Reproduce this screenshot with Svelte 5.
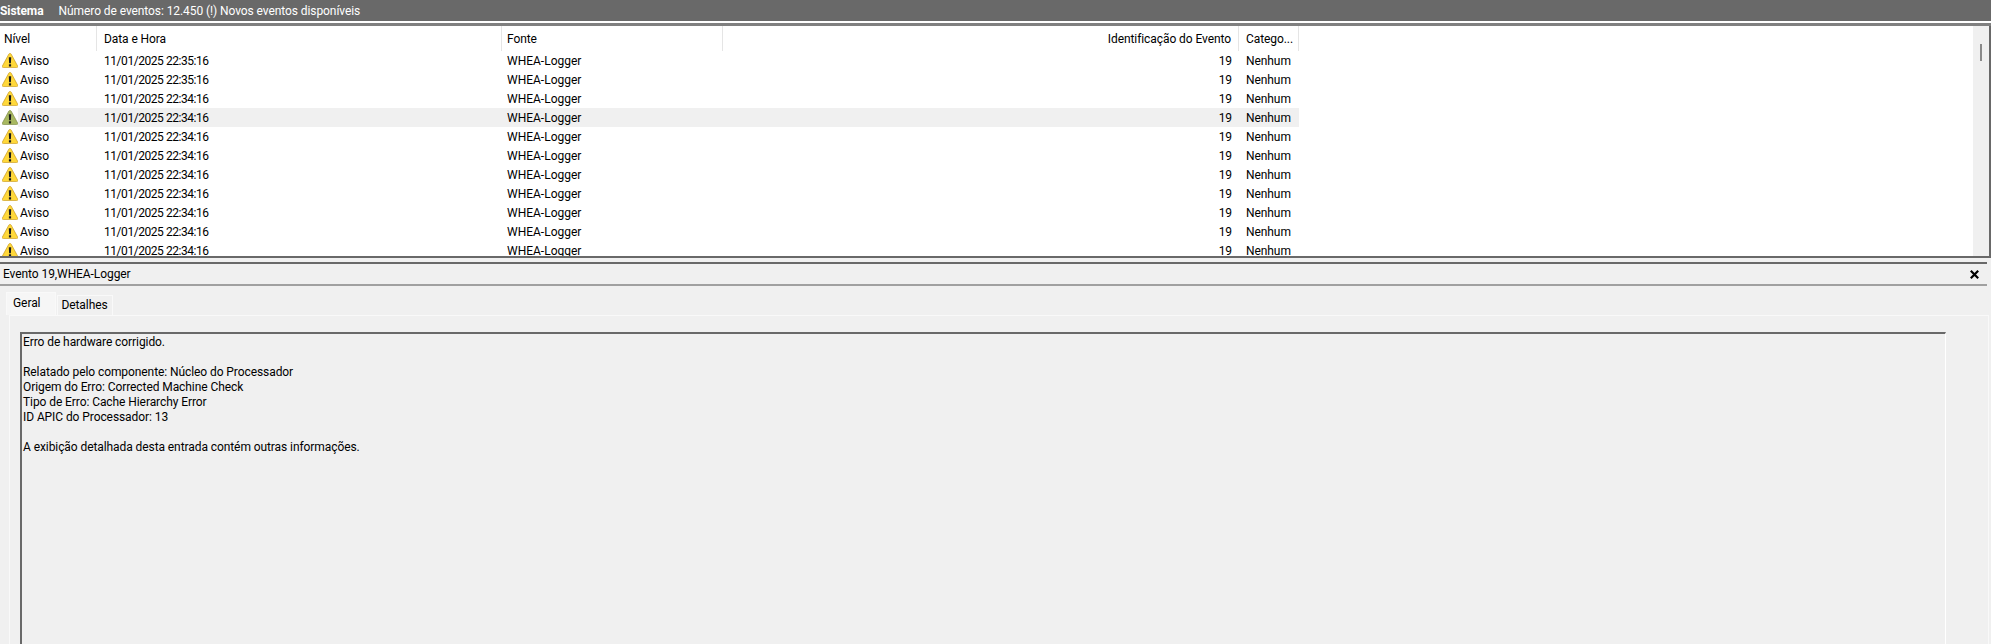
<script lang="ts">
  const columns = [
    { title: 'Nível', width: 97 },
    { title: 'Data e Hora', width: 405 },
    { title: 'Fonte', width: 221 },
    { title: 'Identificação do Evento', width: 516, right: true },
    { title: 'Catego...', width: 60 },
  ]

  const rows = [
    '11/01/2025 22:35:16',
    '11/01/2025 22:35:16',
    '11/01/2025 22:34:16',
    '11/01/2025 22:34:16',
    '11/01/2025 22:34:16',
    '11/01/2025 22:34:16',
    '11/01/2025 22:34:16',
    '11/01/2025 22:34:16',
    '11/01/2025 22:34:16',
    '11/01/2025 22:34:16',
    '11/01/2025 22:34:16',
  ]

  const selected_row = 3

  const message = [
    'Erro de hardware corrigido.',
    '',
    'Relatado pelo componente: Núcleo do Processador',
    'Origem do Erro: Corrected Machine Check',
    'Tipo de Erro: Cache Hierarchy Error',
    'ID APIC do Processador: 13',
    '',
    'A exibição detalhada desta entrada contém outras informações.',
  ]
</script>

<div class="page">
  <header class="title_bar">
    <strong>Sistema</strong>
    <span>Número de eventos: 12.450 (!) Novos eventos disponíveis</span>
  </header>
  <div class="title_rule"></div>

  <section class="event_list">
    <div class="table_area">
      <div class="table_head">
        {#each columns as column}
          <div
            class="head_cell"
            class:right={column.right}
            style="width: {column.width}px"
          >
            {column.title}
          </div>
        {/each}
      </div>

      {#each rows as time, index}
        <div class="table_row">
          <svg
            class="warning_icon"
            class:muted={index === selected_row}
            viewBox="0 0 16 15"
            aria-hidden="true"
          >
            <path class="triangle" d="M8 .4c.5 0 .9.3 1.2.8l6.4 11.8c.4.8 0 1.6-1 1.6H1.4c-1 0-1.4-.8-1-1.6L6.8 1.2C7.1.7 7.5.4 8 .4z" />
            <path class="bang" d="M6.8 4.2h2.4l-.3 6H7.1zM6.9 11.2h2.2v2.2H6.9z" />
          </svg>
          <div class="row_cells" class:selected={index === selected_row}>
            <div class="cell level">Aviso</div>
            <div class="cell time">{time}</div>
            <div class="cell source">WHEA-Logger</div>
            <div class="cell event_id">19</div>
            <div class="cell category">Nenhum</div>
          </div>
        </div>
      {/each}
    </div>

    <div class="scrollbar">
      <div class="scroll_thumb"></div>
    </div>
  </section>

  <section class="details">
    <div class="details_title">
      <span>Evento 19,WHEA-Logger</span>
      <svg class="close_icon" viewBox="0 0 9 9" aria-hidden="true">
        <path d="M.8.8l7.4 7.4M8.2.8L.8 8.2" />
      </svg>
    </div>

    <div class="tabs">
      <div class="tab active">Geral</div>
      <div class="tab">Detalhes</div>
    </div>

    <div class="tab_panel">
      <div class="message_box">
        {#each message as line}
          <div class="message_line">{line}</div>
        {/each}
      </div>
    </div>
  </section>
</div>

<style>
  :global(body) {
    margin: 0;
    background: #f0f0f0;
  }

  .page {
    width: 1991px;
    height: 644px;
    overflow: hidden;
    font-family: Roboto, sans-serif;
    font-size: 12px;
    letter-spacing: -0.08px;
    color: #000;
    background: #f0f0f0;
  }

  .title_bar {
    display: flex;
    gap: 15px;
    align-items: center;
    box-sizing: border-box;
    height: 21px;
    background: #696969;
    color: #fff;
  }

  .title_rule {
    box-sizing: border-box;
    height: 5px;
    border-top: 2px solid #fff;
    background: #808080;
  }

  .event_list {
    display: flex;
    box-sizing: border-box;
    height: 232px;
    border-right: 2px solid #696969;
    border-bottom: 2px solid #696969;
    background: #fff;
  }

  .table_area {
    flex: 1;
    overflow: hidden;
  }

  .table_head {
    display: flex;
    height: 25px;
  }

  .head_cell {
    box-sizing: border-box;
    height: 25px;
    padding: 0 7px;
    border-right: 1px solid #e5e5e5;
    line-height: 26px;
  }

  .head_cell:first-child {
    padding-left: 4px;
  }

  .head_cell:nth-child(3) {
    padding-left: 5px;
  }

  .head_cell.right {
    text-align: right;
  }

  .table_row {
    display: flex;
    height: 19px;
  }

  .warning_icon {
    flex: none;
    width: 16px;
    height: 15px;
    margin: 2px 0 0 2px;
  }

  .triangle {
    fill: #ffd83a;
    stroke: #c99a1e;
    stroke-width: 0.7;
  }

  .muted .triangle {
    fill: #a8b860;
    stroke: #7c8a45;
  }

  .bang {
    fill: #1c1c1c;
  }

  .row_cells {
    display: flex;
    width: 1281px;
    line-height: 20px;
  }

  .row_cells.selected {
    background: #f0f0f0;
  }

  .cell {
    flex: none;
    box-sizing: border-box;
    white-space: nowrap;
  }

  .level {
    width: 79px;
    padding-left: 2px;
  }

  .time {
    width: 405px;
    padding-left: 7px;
    letter-spacing: -0.45px;
  }

  .source {
    width: 221px;
    padding-left: 5px;
    letter-spacing: 0;
  }

  .event_id {
    width: 516px;
    padding-right: 7px;
    text-align: right;
  }

  .category {
    width: 60px;
    padding-left: 7px;
  }

  .scrollbar {
    flex: none;
    width: 16px;
    background: #f0f0f0;
  }

  .scroll_thumb {
    width: 2px;
    height: 17px;
    margin: 18px 0 0 7px;
    background: #8a8a8a;
  }

  .details {
    box-sizing: border-box;
    height: 386px;
    padding-top: 4px;
  }

  .details_title {
    display: flex;
    align-items: center;
    justify-content: space-between;
    box-sizing: border-box;
    width: 1987px;
    height: 24px;
    padding: 0 0 0 3px;
    border-top: 2px solid #696969;
    border-bottom: 2px solid #a0a0a0;
  }

  .close_icon {
    width: 9px;
    height: 9px;
    margin-right: 8px;
    fill: none;
    stroke: #000;
    stroke-width: 2.2;
  }

  .tabs {
    display: flex;
    gap: 1px;
    align-items: flex-end;
    height: 23px;
    margin: 6px 0 0 6px;
  }

  .tab {
    box-sizing: border-box;
    height: 20px;
    padding: 0 4px 0 3px;
    border: 1px solid #f9f9f9;
    border-bottom: none;
    line-height: 19px;
  }

  .tab.active {
    height: 23px;
    padding: 0 15px 0 6px;
    background: #f6f6f6;
    line-height: 20px;
  }

  .tab_panel {
    box-sizing: border-box;
    width: 1980px;
    height: 340px;
    margin-left: 9px;
    padding: 16px 0 0 11px;
    border-top: 1px solid #f9f9f9;
    border-right: 1px solid #f9f9f9;
    border-left: 1px solid #f9f9f9;
  }

  .message_box {
    box-sizing: border-box;
    width: 1926px;
    height: 340px;
    padding: 1px 1px 0;
    margin-left: -1px;
    border-top: 2px solid #696969;
    border-left: 2px solid #696969;
    border-right: 1px solid #fff;
  }

  .message_line {
    height: 15px;
    line-height: 15px;
  }
</style>
